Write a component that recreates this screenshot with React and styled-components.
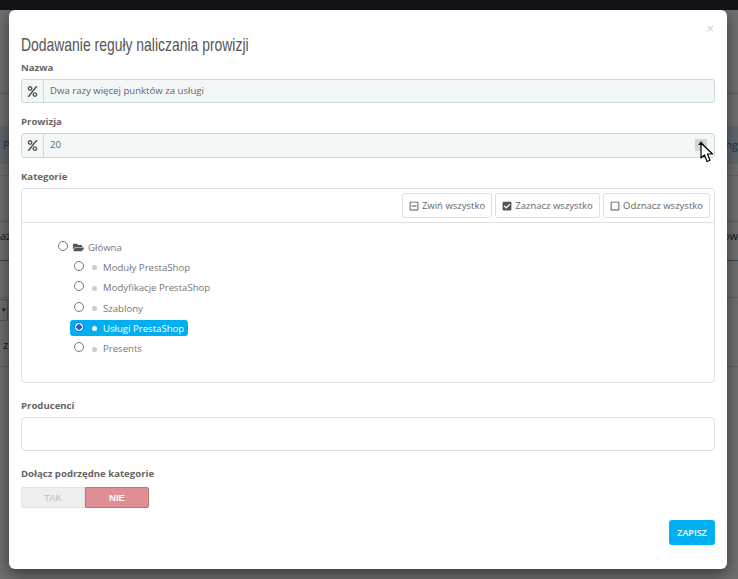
import React from 'react';
import styled, { createGlobalStyle } from 'styled-components';
import { FaFolderOpen, FaCheckSquare, FaRegSquare, FaRegMinusSquare, FaPercent } from 'react-icons/fa';

const GlobalStyle = createGlobalStyle`
  html, body {
    margin: 0;
    height: 579px;
    overflow: hidden;
    background: #f6f6f6;
    font-family: "Open Sans", "Liberation Sans", sans-serif;
  }
  * { box-sizing: border-box; }
`;

const Page = styled.div`
  position: relative;
  width: 738px;
  height: 579px;
  overflow: hidden;
`;

const TopBar = styled.div`
  height: 10px;
  background: #2a2d33;
`;

const PageRow = styled.div`
  height: ${(p) => p.$h}px;
  display: flex;
  align-items: ${(p) => (p.$high ? 'flex-start' : 'center')};
  justify-content: space-between;
  padding-top: ${(p) => (p.$high ? 6 : 0)}px;
  font-size: 11px;
  color: ${(p) => p.$color || '#333'};
  background: ${(p) => p.$bg || 'transparent'};
  border-bottom: 1px solid ${(p) => p.$line || 'transparent'};
`;

const LeftText = styled.span`
  padding-left: ${(p) => p.$pad || 0}px;
`;

const PageButton = styled.span`
  display: flex;
  align-items: center;
  justify-content: center;
  width: 8px;
  height: 22px;
  border: 1px solid #bbb;
  border-left: 0;
  border-radius: 0 3px 3px 0;
  font-size: 7px;
`;

const Overlay = styled.div`
  position: absolute;
  inset: 0;
  background: rgba(0, 0, 0, 0.55);
`;

const Modal = styled.div`
  position: absolute;
  left: 9px;
  top: 10px;
  width: 718px;
  height: 559px;
  padding: 25px 12px 0;
  background: #fff;
  border-radius: 6px;
  box-shadow: 0 5px 15px rgba(0, 0, 0, 0.5);
  display: flex;
  flex-direction: column;
`;

const CloseMark = styled.span`
  position: absolute;
  top: 11px;
  right: 13px;
  font-family: "Liberation Sans", sans-serif;
  font-size: 13px;
  line-height: 16px;
  color: #cfcfcf;
`;

const Title = styled.h4`
  margin: 0 0 5px;
  font-family: "Liberation Sans", sans-serif;
  font-weight: 400;
  font-size: 19px;
  line-height: 20px;
  color: #555;
  white-space: nowrap;
  transform: scaleX(0.733);
  transform-origin: left center;
`;

const Label = styled.label`
  display: block;
  height: 14px;
  margin-top: ${(p) => p.$top}px;
  margin-bottom: ${(p) => p.$bottom}px;
  font-size: 9.6px;
  font-weight: 700;
  line-height: 16px;
  color: #666;
`;

const InputGroup = styled.div`
  position: relative;
  display: flex;
  height: ${(p) => p.$h}px;
  background: #f3f7f8;
  border: 1px solid #c7d9df;
  border-radius: 3px;
`;

const Prefix = styled.span`
  width: 22px;
  display: flex;
  align-items: center;
  justify-content: center;
  border-right: 1px solid #c7d9df;
  color: #555;
  font-size: 11px;
`;

const InputValue = styled.span`
  padding-left: 6px;
  font-size: 9.6px;
  line-height: 22px;
  color: #666;
`;

const Spinner = styled.span`
  position: absolute;
  top: 5px;
  right: 7px;
  width: 12px;
  height: 12px;
  padding-top: 2px;
  display: flex;
  justify-content: center;
  background: #d2d5d5;

  &::before {
    content: '';
    width: 0;
    height: 0;
    border-left: 3.5px solid transparent;
    border-right: 3.5px solid transparent;
    border-bottom: 4px solid #333;
  }
`;

const Cursor = styled.svg`
  position: absolute;
  left: 700px;
  top: 142px;
  width: 14px;
  height: 21px;
`;

const Panel = styled.div`
  height: 195px;
  border: 1px solid #e0e0e0;
  border-radius: 4px;
`;

const PanelHead = styled.div`
  height: 34px;
  padding: 4px 4px 0 0;
  display: flex;
  justify-content: flex-end;
  gap: 3px;
  border-bottom: 1px solid #e0e0e0;
`;

const ToolButton = styled.button`
  width: ${(p) => p.$w}px;
  height: 25px;
  padding: 0;
  display: flex;
  align-items: center;
  justify-content: center;
  gap: 3px;
  background: #fff;
  border: 1px solid #e0e0e0;
  border-radius: 3px;
  font-family: inherit;
  font-size: 9.5px;
  color: #666;

  svg { font-size: 10px; color: #555; }
`;

const Tree = styled.div`
  padding: 14px 0 0 36px;
`;

const TreeRow = styled.div`
  height: 20.3px;
  display: flex;
  align-items: center;
  padding-left: ${(p) => (p.$root ? 0 : 12)}px;
  font-size: 9.6px;
  color: #777;
`;

const TreeItem = styled.span`
  height: 16px;
  display: inline-flex;
  align-items: center;
  padding-right: 4px;
  margin-left: ${(p) => (p.$root ? -4 : 0)}px;
  border-radius: 3px;
  background: ${(p) => (p.$active ? '#00aff0' : 'transparent')};
  color: ${(p) => (p.$active ? '#fff' : '#777')};
  font-weight: ${(p) => (p.$active ? 500 : 400)};
`;

const Radio = styled.span`
  width: 10px;
  height: 10px;
  margin: -3px 0 0 4px;
  flex: none;
  border-radius: 50%;
  border: 1px solid ${(p) => (p.$on ? '#2a6fd6' : '#777')};
  background: ${(p) => (p.$on ? 'radial-gradient(circle, #1a5fe0 0 2.5px, #fff 3px)' : '#fff')};
`;

const Dot = styled.span`
  width: 5px;
  height: 5px;
  margin: 1px 6px 0 8px;
  flex: none;
  border-radius: 50%;
  background: ${(p) => (p.$on ? '#fff' : '#ccc')};
`;

const Folder = styled(FaFolderOpen)`
  margin: 0 4px 0 5px;
  font-size: 11px;
  color: #555;
`;

const EmptyBox = styled.div`
  height: 34px;
  border: 1px solid #e0e0e0;
  border-radius: 4px;
`;

const Switch = styled.div`
  display: flex;
  width: 128px;
  height: 21px;
`;

const SwitchPart = styled.span`
  flex: 1;
  display: flex;
  align-items: center;
  justify-content: center;
  font-family: "Liberation Sans", sans-serif;
  font-size: 9.5px;
  font-weight: ${(p) => (p.$on ? 700 : 400)};
  color: ${(p) => (p.$on ? '#fff' : '#bbb')};
  background: ${(p) => (p.$on ? '#e08e95' : '#eee')};
  border: 1px solid ${(p) => (p.$on ? '#cc6f75' : '#e3e3e3')};
  border-radius: ${(p) => (p.$on ? '0 2px 2px 0' : '2px 0 0 2px')};
`;

const Footer = styled.div`
  display: flex;
  justify-content: flex-end;
  margin-top: 12px;
`;

const SaveButton = styled.button`
  width: 46px;
  height: 25px;
  padding: 0;
  background: #00aff0;
  border: 0;
  border-radius: 3px;
  font-family: inherit;
  font-size: 9px;
  font-weight: 600;
  color: #fff;
`;

const categories = ['Moduły PrestaShop', 'Modyfikacje PrestaShop', 'Szablony', 'Usługi PrestaShop', 'Presents'];

export default function App() {
  return (
    <Page>
      <GlobalStyle />
      <TopBar />
      <PageRow $h={84} $line="#d8d8d8" />
      <PageRow $h={32} />
      <PageRow $h={38} $bg="#d4e6ee" $color="#3d7f99">
        <LeftText $pad={3}>P</LeftText>
        <span>ng</span>
      </PageRow>
      <PageRow $h={12} $line="#d8d8d8" />
      <PageRow $h={46} $line="#d8d8d8" />
      <PageRow $h={39} $high $line="#6aa5c4">
        <LeftText>azw</LeftText>
        <span>ow</span>
      </PageRow>
      <PageRow $h={37} $line="#d8d8d8" />
      <PageRow $h={24}>
        <PageButton>▾</PageButton>
      </PageRow>
      <PageRow $h={45} $line="#d8d8d8">
        <LeftText $pad={3}>z</LeftText>
      </PageRow>
      <Overlay />

      <Modal>
        <CloseMark>×</CloseMark>
        <Title>Dodawanie reguły naliczania prowizji</Title>
        <Label $top={0} $bottom={5}>Nazwa</Label>
        <InputGroup $h={24}>
          <Prefix><FaPercent /></Prefix>
          <InputValue>Dwa razy więcej punktów za usługi</InputValue>
        </InputGroup>
        <Label $top={11} $bottom={5}>Prowizja</Label>
        <InputGroup $h={25}>
          <Prefix><FaPercent /></Prefix>
          <InputValue>20</InputValue>
          <Spinner />
        </InputGroup>
        <Label $top={11} $bottom={5}>Kategorie</Label>
        <Panel>
          <PanelHead>
            <ToolButton $w={90}><FaRegMinusSquare />Zwiń wszystko</ToolButton>
            <ToolButton $w={105}><FaCheckSquare />Zaznacz wszystko</ToolButton>
            <ToolButton $w={107}><FaRegSquare />Odznacz wszystko</ToolButton>
          </PanelHead>
          <Tree>
            <TreeRow $root>
              <TreeItem $root>
                <Radio />
                <Folder />
                Główna
              </TreeItem>
            </TreeRow>
            {categories.map((name, i) => (
              <TreeRow key={name}>
                <TreeItem $active={i === 3}>
                  <Radio $on={i === 3} />
                  <Dot $on={i === 3} />
                  {name}
                </TreeItem>
              </TreeRow>
            ))}
          </Tree>
        </Panel>
        <Label $top={15} $bottom={5}>Producenci</Label>
        <EmptyBox />
        <Label $top={15} $bottom={7}>Dołącz podrzędne kategorie</Label>
        <Switch>
          <SwitchPart>TAK</SwitchPart>
          <SwitchPart $on>NIE</SwitchPart>
        </Switch>
        <Footer>
          <SaveButton>ZAPISZ</SaveButton>
        </Footer>
      </Modal>

      <Cursor viewBox="0 0 14 21">
        <path d="M1 1 L1 16 L4.5 13 L7 19.5 L10 18.2 L7.5 12 L12.5 12 Z" fill="#fff" stroke="#000" strokeWidth="1.2" strokeLinejoin="round" />
      </Cursor>
    </Page>
  );
}
